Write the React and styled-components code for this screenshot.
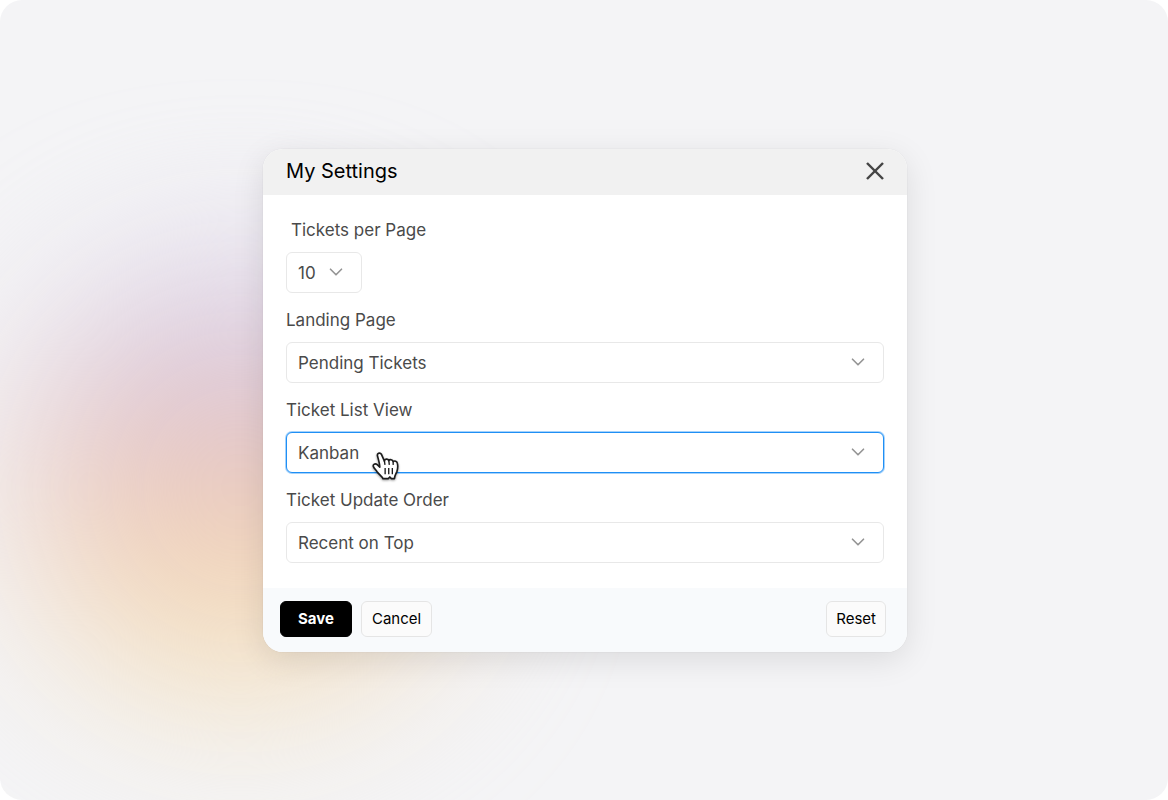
import React, { useState } from 'react'
import styled, { createGlobalStyle } from 'styled-components'
import { ChevronDown, X } from 'lucide-react'

const GlobalStyle = createGlobalStyle`
  * {
    box-sizing: border-box;
  }
  body {
    margin: 0;
    background: #ffffff;
    font-family: Inter, 'Liberation Sans', sans-serif;
  }
`

const Stage = styled.main`
  position: relative;
  display: flex;
  align-items: center;
  justify-content: center;
  min-height: 100vh;
  padding: 24px 24px 24px 26px;
  overflow: hidden;
  border-radius: 22px;
  background: #f4f4f6;
`

const Glow = styled.div`
  position: absolute;
  left: 20px;
  top: 262px;
  width: 440px;
  height: 450px;
  border-radius: 50%;
  background: linear-gradient(
    #d6d0e8 0%,
    #d9c8de 20%,
    #e0c4cb 34%,
    #ecc8bd 48%,
    #f2d4ba 64%,
    #f3e0bd 80%,
    #f4e6cc 100%
  );
  filter: blur(80px);
`

const Card = styled.form`
  position: relative;
  width: 100%;
  max-width: 644px;
  overflow: hidden;
  border-radius: 20px;
  background: #ffffff;
  box-shadow: 0 0 0 1px rgba(0, 0, 0, 0.02), 0 8px 32px rgba(0, 0, 0, 0.1);
`

const Header = styled.header`
  display: flex;
  align-items: center;
  justify-content: space-between;
  height: 46px;
  padding: 0 16px 2px 23px;
  background: #f1f1f1;
`

const Title = styled.h1`
  margin: 0;
  font-size: 20px;
  font-weight: 400;
  line-height: 24px;
  color: #000000;
`

const CloseButton = styled.button`
  display: flex;
  padding: 0;
  border: none;
  background: none;
  color: #444444;
  cursor: pointer;
`

const Fields = styled.div`
  display: flex;
  flex-direction: column;
  gap: 15px;
  padding: 23px 23px 25px;
`

const Field = styled.div`
  display: flex;
  flex-direction: column;
  align-items: flex-start;
  gap: 10px;
`

const Label = styled.label`
  padding-left: ${(props) => (props.$indent ? '5px' : '0')};
  font-size: 17px;
  line-height: 24px;
  color: #4a4a4a;
`

const SelectBox = styled.div`
  position: relative;
  display: grid;
  align-items: center;
  width: ${(props) => (props.$compact ? '76px' : '100%')};
  color: #949494;

  > * {
    grid-area: 1 / 1;
  }
  > svg {
    justify-self: end;
    margin-right: 15px;
    pointer-events: none;
  }
`

const Select = styled.select`
  width: 100%;
  height: 41px;
  padding: 1px 40px 0 11px;
  appearance: none;
  border: 1px solid ${(props) => (props.$active ? '#1f8ff5' : '#e8e8e8')};
  border-radius: 6px;
  outline: none;
  background: #ffffff;
  box-shadow: ${(props) => (props.$active ? '0 0 0 1px rgba(31, 143, 245, 0.4)' : 'none')};
  font-family: inherit;
  font-size: 17px;
  color: #4a4a4a;
`

const Pointer = styled.svg`
  position: absolute;
  left: 86px;
  top: 18px;
  width: 31px;
  height: 35px;
  filter: drop-shadow(0 1px 1px rgba(0, 0, 0, 0.4));
`

const Footer = styled.footer`
  display: flex;
  align-items: center;
  gap: 9px;
  padding: 13px 21px 15px 17px;
  background: #f8fafc;
`

const Button = styled.button`
  height: 36px;
  padding: 0 10px;
  border: 1px solid #e5e5e5;
  border-radius: 6px;
  background: #fbfbfb;
  font-family: inherit;
  font-size: 15px;
  color: #000000;
  cursor: pointer;
`

const SaveButton = styled(Button)`
  padding: 0 17px;
  border-color: #000000;
  background: #000000;
  font-weight: 700;
  color: #ffffff;
`

const ResetButton = styled(Button)`
  margin-left: auto;
  padding: 0 9px;
`

const fields = [
  { id: 'perPage', label: 'Tickets per Page', options: ['10', '25', '50'], compact: true },
  { id: 'landing', label: 'Landing Page', options: ['Pending Tickets', 'All Tickets'] },
  { id: 'view', label: 'Ticket List View', options: ['Kanban', 'List'], active: true },
  { id: 'order', label: 'Ticket Update Order', options: ['Recent on Top', 'Oldest on Top'] },
]

const defaults = {
  perPage: '10',
  landing: 'Pending Tickets',
  view: 'Kanban',
  order: 'Recent on Top',
}

function HandPointer() {
  return (
    <Pointer viewBox="0 0 30 34" aria-hidden="true">
      <path
        d="M5.3 5.8C4.6 3.3 7.6 1.9 9.1 4.2L12 10.8C12.2 8.4 15.4 8.2 16.3 10.3C17.3 8.8 19.9 9.3 20.5 11.3C21.9 10 24.2 10.9 24.6 13C25.2 15.7 25 18.3 24.1 21C23.2 23.3 21.9 24.5 21.7 27.8H18.8L17.3 26.2L15.7 27.8H10.6C9.6 25.4 6.7 23.7 4.9 21.1C3.7 19.2 2.2 18.2 1.3 16.2C.5 14 3 12.6 5 14.3L7.5 16.6C7.5 13.3 6.3 9.7 5.3 5.8Z"
        fill="#ffffff"
        stroke="#1c1c1c"
        strokeWidth="1.6"
        strokeLinejoin="round"
      />
      <path
        d="M12 10.8L12.5 14M16.3 10.3L16.7 14M20.5 11.3V14"
        fill="none"
        stroke="#1c1c1c"
        strokeWidth="1.3"
        strokeLinecap="round"
      />
      <path d="M12.7 17.5V23.5M16.2 17.5V23.5M19.7 17.5V23.5" stroke="#1c1c1c" strokeWidth="1.3" />
    </Pointer>
  )
}

export default function App() {
  const [values, setValues] = useState(defaults)

  const change = (id) => (e) => setValues({ ...values, [id]: e.target.value })

  return (
    <>
      <GlobalStyle />
      <Stage>
        <Glow />
        <Card onSubmit={(e) => e.preventDefault()}>
          <Header>
            <Title>My Settings</Title>
            <CloseButton type="button" aria-label="Close">
              <X size={32} strokeWidth={1.8} strokeLinecap="butt" />
            </CloseButton>
          </Header>

          <Fields>
            {fields.map((field) => (
              <Field key={field.id}>
                <Label htmlFor={field.id} $indent={field.compact}>
                  {field.label}
                </Label>
                <SelectBox $compact={field.compact}>
                  <Select
                    id={field.id}
                    value={values[field.id]}
                    onChange={change(field.id)}
                    $active={field.active}
                  >
                    {field.options.map((option) => (
                      <option key={option}>{option}</option>
                    ))}
                  </Select>
                  <ChevronDown size={22} strokeWidth={1.8} />
                  {field.active && <HandPointer />}
                </SelectBox>
              </Field>
            ))}
          </Fields>

          <Footer>
            <SaveButton type="submit">Save</SaveButton>
            <Button type="button">Cancel</Button>
            <ResetButton type="button" onClick={() => setValues(defaults)}>
              Reset
            </ResetButton>
          </Footer>
        </Card>
      </Stage>
    </>
  )
}
